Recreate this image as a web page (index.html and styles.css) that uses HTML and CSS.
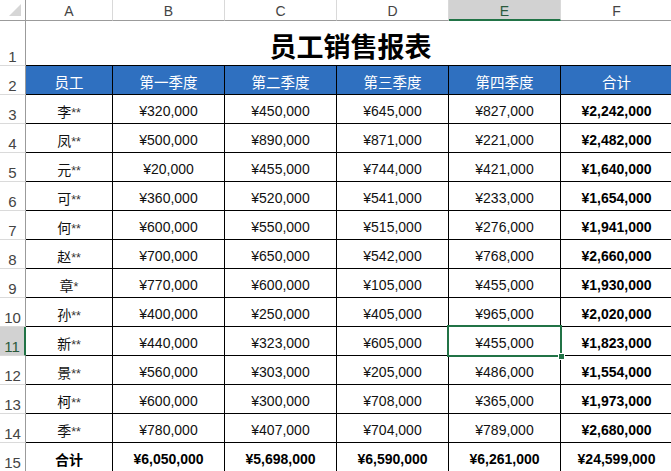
FILE: index.html
```html
<!DOCTYPE html>
<html lang="zh-CN">
<head>
<meta charset="utf-8">
<title>员工销售报表</title>
<link rel="stylesheet" href="styles.css">
</head>
<body>
<div class="sheet">
  <div class="corner"><span class="tri"></span></div>
  <div class="ch">A</div><div class="ch">B</div><div class="ch">C</div><div class="ch">D</div><div class="ch sel">E</div><div class="ch">F</div>

  <div class="rh">1</div>
  <div class="title">员工销售报表</div>

  <div class="rh">2</div>
  <div class="hd">员工</div><div class="hd">第一季度</div><div class="hd">第二季度</div><div class="hd">第三季度</div><div class="hd">第四季度</div><div class="hd">合计</div>

  <div class="rh">3</div>
  <div class="c">李<span class="ast">**</span></div><div class="c">¥320,000</div><div class="c">¥450,000</div><div class="c">¥645,000</div><div class="c">¥827,000</div><div class="c b">¥2,242,000</div>
  <div class="rh">4</div>
  <div class="c">凤<span class="ast">**</span></div><div class="c">¥500,000</div><div class="c">¥890,000</div><div class="c">¥871,000</div><div class="c">¥221,000</div><div class="c b">¥2,482,000</div>
  <div class="rh">5</div>
  <div class="c">元<span class="ast">**</span></div><div class="c">¥20,000</div><div class="c">¥455,000</div><div class="c">¥744,000</div><div class="c">¥421,000</div><div class="c b">¥1,640,000</div>
  <div class="rh">6</div>
  <div class="c">可<span class="ast">**</span></div><div class="c">¥360,000</div><div class="c">¥520,000</div><div class="c">¥541,000</div><div class="c">¥233,000</div><div class="c b">¥1,654,000</div>
  <div class="rh">7</div>
  <div class="c">何<span class="ast">**</span></div><div class="c">¥600,000</div><div class="c">¥550,000</div><div class="c">¥515,000</div><div class="c">¥276,000</div><div class="c b">¥1,941,000</div>
  <div class="rh">8</div>
  <div class="c">赵<span class="ast">**</span></div><div class="c">¥700,000</div><div class="c">¥650,000</div><div class="c">¥542,000</div><div class="c">¥768,000</div><div class="c b">¥2,660,000</div>
  <div class="rh">9</div>
  <div class="c">章<span class="ast">*</span></div><div class="c">¥770,000</div><div class="c">¥600,000</div><div class="c">¥105,000</div><div class="c">¥455,000</div><div class="c b">¥1,930,000</div>
  <div class="rh">10</div>
  <div class="c">孙<span class="ast">**</span></div><div class="c">¥400,000</div><div class="c">¥250,000</div><div class="c">¥405,000</div><div class="c">¥965,000</div><div class="c b">¥2,020,000</div>
  <div class="rh rsel">11</div>
  <div class="c">新<span class="ast">**</span></div><div class="c">¥440,000</div><div class="c">¥323,000</div><div class="c">¥605,000</div><div class="c">¥455,000</div><div class="c b">¥1,823,000</div>
  <div class="rh">12</div>
  <div class="c">景<span class="ast">**</span></div><div class="c">¥560,000</div><div class="c">¥303,000</div><div class="c">¥205,000</div><div class="c">¥486,000</div><div class="c b">¥1,554,000</div>
  <div class="rh">13</div>
  <div class="c">柯<span class="ast">**</span></div><div class="c">¥600,000</div><div class="c">¥300,000</div><div class="c">¥708,000</div><div class="c">¥365,000</div><div class="c b">¥1,973,000</div>
  <div class="rh">14</div>
  <div class="c">季<span class="ast">**</span></div><div class="c">¥780,000</div><div class="c">¥407,000</div><div class="c">¥704,000</div><div class="c">¥789,000</div><div class="c b">¥2,680,000</div>
  <div class="rh">15</div>
  <div class="c b">合计</div><div class="c b">¥6,050,000</div><div class="c b">¥5,698,000</div><div class="c b">¥6,590,000</div><div class="c b">¥6,261,000</div><div class="c b">¥24,599,000</div>

  <div class="selbox"><span class="handle"></span></div>
</div>
</body>
</html>
```
FILE: styles.css
```css
* { box-sizing: border-box; }
html, body { margin: 0; padding: 0; background: #fff; overflow: hidden; }
body { width: 671px; height: 471px; }

.sheet {
  position: relative;
  display: grid;
  grid-template-columns: 26px 87px repeat(5, 112px);
  grid-template-rows: 21px 45px repeat(14, 29px);
  font-family: "Liberation Sans", "Noto Sans CJK SC", sans-serif;
  color: #000;
}

.corner {
  position: relative;
  border-right: 1px solid #9b9b9b;
  border-bottom: 1px solid #9b9b9b;
}
.tri {
  position: absolute;
  right: 4px;
  bottom: 4px;
  width: 0;
  height: 0;
  border-left: 12px solid transparent;
  border-bottom: 12px solid #d6d6d6;
}

.ch {
  border-right: 1px solid #d9d9d9;
  border-bottom: 1px solid #9b9b9b;
  display: flex;
  align-items: center;
  justify-content: center;
  font-size: 14px;
  color: #444;
  padding-top: 1px;
}
.ch.sel {
  background: #d2d2d2;
  border-bottom: 2px solid #217346;
  color: #2a5a3c;
  padding-top: 2px;
}

.rh {
  border-right: 1px solid #9b9b9b;
  border-bottom: 1px solid #dadada;
  display: flex;
  align-items: flex-end;
  justify-content: center;
  font-size: 15px;
  color: #444;
  line-height: 17px;
}
.rh.rsel {
  background: #d2d2d2;
  border-right: 2px solid #217346;
  color: #2a5a3c;
}

.title {
  grid-column: 2 / 8;
  border-bottom: 1px solid #000;
  display: flex;
  align-items: flex-end;
  justify-content: center;
  font-family: "Noto Sans CJK SC", sans-serif;
  font-weight: 700;
  font-size: 27px;
  line-height: 30px;
  padding-bottom: 4px;
  padding-left: 2px;
}

.hd {
  background: #2f70c0;
  color: #fff;
  border-right: 1px solid #000;
  border-bottom: 1px solid #000;
  display: flex;
  align-items: center;
  justify-content: center;
  font-family: "Noto Sans CJK SC", sans-serif;
  font-size: 14.5px;
  padding-top: 2px;
}

.c {
  border-right: 1px solid #000;
  border-bottom: 1px solid #000;
  display: flex;
  align-items: center;
  justify-content: center;
  font-size: 14px;
  padding-top: 3px;
  color: #111;
}
.c.b { font-weight: 700; color: #000; }
.ast { font-size: 12.5px; color: #333; position: relative; top: 2px; }

.selbox {
  position: absolute;
  left: 447px;
  top: 325px;
  width: 115px;
  height: 32px;
  border: 2px solid #217346;
  pointer-events: none;
}
.handle {
  position: absolute;
  right: -5px;
  bottom: -5px;
  width: 7px;
  height: 7px;
  background: #217346;
  border: 1px solid #fff;
}
```
